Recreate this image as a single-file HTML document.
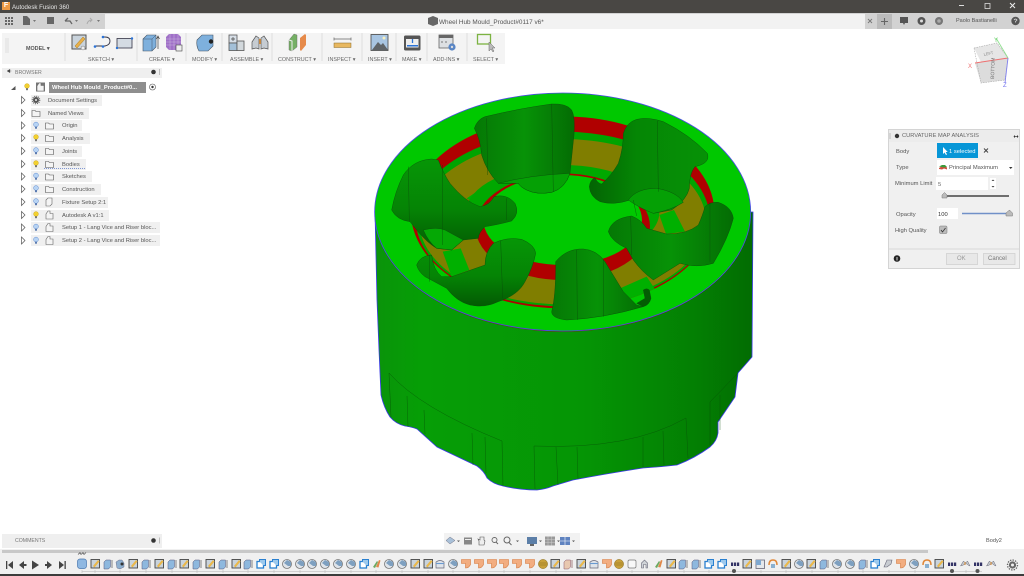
<!DOCTYPE html>
<html><head><meta charset="utf-8"><style>
html,body{margin:0;padding:0;background:#fff;width:1024px;height:576px;overflow:hidden}
#r{position:relative;width:1024px;height:576px;overflow:hidden;filter:blur(.35px);font-family:"Liberation Sans",sans-serif;color:#555;background:#fff}
#r div{position:absolute;box-sizing:border-box}
.t{font-size:5.8px;white-space:nowrap;line-height:11px}
.l{font-size:5.4px;white-space:nowrap;color:#666;line-height:8px;top:56px}
.rw{background:#f0f0f0;height:11px;font-size:5.8px;line-height:13.5px;color:#555;white-space:nowrap}
svg{position:absolute;left:0;top:0}
#tl{left:76px;top:556.5px;height:14px;display:flex}
#tl svg{position:static;width:12.8px;height:14px;flex:none}
</style></head><body><div id="r">

<div style="left:0;top:0;width:1024px;height:13px;background:#494744"></div>
<div style="left:0;top:13px;width:1024px;height:16px;background:#d2d2d2"></div>
<div style="left:105px;top:14px;width:760px;height:15px;background:#f2f2f2"></div>
<div style="left:0;top:29px;width:1024px;height:4px;background:#fff"></div>
<div class="t" style="left:12px;top:2px;color:#e6e6e6;font-size:6.100px">Autodesk Fusion 360</div>
<div style="left:2px;top:2px;width:8px;height:8px;background:#ee9a45;color:#fff;font:bold 7px/8px 'Liberation Sans',sans-serif;text-align:center">F</div>
<div class="t" style="left:439px;top:17px;font-size:6.400px;color:#555">Wheel Hub Mould_Product#0117 v6*</div>
<div class="t" style="left:956px;top:16px;color:#555;font-size:5.500px">Paolo Bastianelli</div>

<div style="left:2px;top:33px;width:503px;height:31px;background:#f4f4f4"></div>
<div class="l" style="left:26px;top:45px;font-weight:bold;color:#555">MODEL ▾</div>
<div class="l" style="left:88px">SKETCH ▾</div>
<div class="l" style="left:149px">CREATE ▾</div>
<div class="l" style="left:192px">MODIFY ▾</div>
<div class="l" style="left:230px">ASSEMBLE ▾</div>
<div class="l" style="left:278px">CONSTRUCT ▾</div>
<div class="l" style="left:328px">INSPECT ▾</div>
<div class="l" style="left:368px">INSERT ▾</div>
<div class="l" style="left:402px">MAKE ▾</div>
<div class="l" style="left:433px">ADD-INS ▾</div>
<div class="l" style="left:473px">SELECT ▾</div>

<div style="left:2px;top:68px;width:160px;height:10px;background:#efefef"></div>
<div class="t" style="left:15px;top:67.5px;color:#777;font-size:5.2px">BROWSER</div>
<div class="rw" style="left:49px;top:82px;width:97px;background:#8e8e8e;color:#fff;font-weight:bold;padding-left:3px">Wheel Hub Mould_Product#0...</div>
<div class="rw" style="left:31px;top:94.5px;width:71px;padding-left:17px">Document Settings</div>
<div class="rw" style="left:31px;top:107.5px;width:58px;padding-left:17px">Named Views</div>
<div class="rw" style="left:31px;top:120px;width:51px;padding-left:31px">Origin</div>
<div class="rw" style="left:31px;top:132.5px;width:59px;padding-left:31px">Analysis</div>
<div class="rw" style="left:31px;top:145.5px;width:51px;padding-left:31px">Joints</div>
<div class="rw" style="left:31px;top:158.5px;width:55px;padding-left:31px">Bodies</div>
<div class="rw" style="left:31px;top:171px;width:61px;padding-left:31px">Sketches</div>
<div class="rw" style="left:31px;top:183.5px;width:70px;padding-left:31px">Construction</div>
<div class="rw" style="left:31px;top:196.5px;width:77px;padding-left:31px">Fixture Setup 2:1</div>
<div class="rw" style="left:31px;top:209.5px;width:78px;padding-left:31px">Autodesk A v1:1</div>
<div class="rw" style="left:31px;top:222px;width:129px;padding-left:31px">Setup 1 - Lang Vice and Riser bloc...</div>
<div class="rw" style="left:31px;top:235px;width:129px;padding-left:31px">Setup 2 - Lang Vice and Riser bloc...</div>

<div style="left:2px;top:534px;width:160px;height:14px;background:#efefef"></div>
<div class="t" style="left:15px;top:535.5px;color:#777;font-size:5.2px">COMMENTS</div>

<svg width="1024" height="576" viewBox="0 0 1024 576">
<defs>
<linearGradient id="bd" x1="0" x2="1" y1="0" y2="0"><stop offset="0" stop-color="#0a930a"/><stop offset=".12" stop-color="#069e06"/><stop offset=".55" stop-color="#059505"/><stop offset=".85" stop-color="#037f03"/><stop offset="1" stop-color="#026c02"/></linearGradient>
<linearGradient id="lb" x1="0" x2="0" y1="0" y2="1"><stop offset="0" stop-color="#069606"/><stop offset=".55" stop-color="#058405"/><stop offset="1" stop-color="#035a03"/></linearGradient>
<linearGradient id="lc" x1="0" x2="1" y1="0" y2="0"><stop offset="0" stop-color="#036403"/><stop offset=".4" stop-color="#058605"/><stop offset="1" stop-color="#069206"/></linearGradient>
<linearGradient id="ld" x1="0" x2="1" y1="0" y2="0"><stop offset="0" stop-color="#057805"/><stop offset=".5" stop-color="#079207"/><stop offset="1" stop-color="#046c04"/></linearGradient>
<clipPath id="ringc"><ellipse cx="578" cy="382" rx="455" ry="288"/></clipPath>
</defs>

<!-- body -->
<path d="M375 212L377 300L379 350L381 395Q384 408 390 417Q396 424 405 426Q412 427 417 429L437 447L477 466Q484 471 487 478Q493 484 503 486Q520 490 537 490Q546 489 553 486L573 480Q610 473 643 468Q660 467 677 465Q695 458 710 447Q717 441 718 433L718 422L735 397L738 373L752 357L753 212Z" fill="url(#bd)" stroke="#3a3ae6" stroke-width=".8"/>
<g fill="none" stroke="#054f05" stroke-width=".45" stroke-opacity=".8">
<path d="M389 373Q420 408 502 441L503 486M389 373L391 417M407 396L408 427M424 410L425 434M472 433L473 465M485 437L486 473"/>
<path d="M534 446L535 489M556 447L558 485M577 447L578 479M534 446Q630 450 686 418L688 458M643 437L643 467M663 431L664 465"/>
<path d="M710 402L710 445M710 402L738 373M720 395L720 430"/>
</g>

<g transform="translate(370 85) scale(.33333)">
<ellipse cx="578" cy="381" rx="564" ry="357" fill="#a00000" transform="translate(0 2)"/>
<ellipse cx="578" cy="381" rx="564" ry="357" fill="#00c800" stroke="#4a4ae8" stroke-width="2.500"/>
<!-- ring -->
<ellipse cx="578" cy="382" rx="455" ry="288" fill="#b00000"/>
<ellipse cx="578" cy="402" rx="441" ry="262" fill="#00a400"/>
<ellipse cx="578" cy="410" rx="430" ry="248" fill="#807e00"/>
<g clip-path="url(#ringc)" fill="#00b000">
<path d="M290 340L365 290L392 325L335 365Z"/>
<path d="M750 610L830 575L860 620L780 660Z"/>
<path d="M868 390L912 375L945 440L888 447Z"/>
<path d="M218 500L272 490L298 555L245 575Z"/>
</g>
<ellipse cx="578" cy="382" rx="290" ry="142" fill="#00a800"/>
<ellipse cx="578" cy="425" rx="262" ry="160" fill="#b00000"/>
<ellipse cx="578" cy="405" rx="238" ry="135" fill="#00c800"/>

<!-- lobes -->
<g stroke="#0a4a0a" stroke-width="1.200" stroke-linejoin="round">
<path d="M313 130Q322 103 345 95Q450 70 545 57Q590 55 605 75Q616 95 612 150L600 265Q585 310 545 322Q500 330 470 315Q450 305 445 295L385 295Q350 260 335 210Q332 165 313 130Z" fill="url(#ld)"/>
<path d="M385 295Q480 270 600 265Q585 310 545 322Q500 330 470 315Q450 305 445 295Z" fill="#05a005"/>
<path d="M760 145Q770 112 800 103Q835 95 880 110Q960 150 1012 205Q1022 235 975 245Q958 265 958 310Q950 345 905 375L850 385L825 370L780 345Q730 362 690 350Q660 335 658 305Q660 285 675 278Q682 295 695 297Q725 270 745 235Q760 190 760 145Z" fill="url(#lc)"/>
<path d="M775 345Q800 310 860 310Q920 320 940 352Q905 375 850 385Q810 370 775 345Z" fill="#05a005"/>
<path d="M715 440Q725 400 785 393Q815 405 830 430L890 447Q950 448 985 420Q998 390 1005 365Q1020 350 1045 352Q1085 365 1090 400Q1075 460 1030 535Q980 550 930 535L850 585Q815 560 790 525L770 490Q725 470 715 440Z" fill="url(#ld)"/>
<path d="M557 530Q590 490 640 492Q680 495 705 530L760 620L800 660L820 665Q700 700 590 705Q545 700 545 680Q558 630 557 530Z" fill="url(#ld)"/>
<path d="M820 615Q830 608 838 615L843 640Q838 660 820 665L800 655L825 640Z" fill="#035c03"/>
<path d="M140 540Q150 512 185 510Q190 555 215 575L245 575L345 540Q345 500 370 475Q410 455 455 463Q495 480 497 505Q490 545 465 590Q445 630 385 650Q345 670 300 660Q260 650 230 610L165 575Q145 560 140 540Z" fill="url(#lb)"/>
<path d="M65 375Q75 320 100 270Q130 225 185 222L205 225Q220 265 240 295Q285 350 330 365Q360 360 372 335Q410 325 435 355Q450 385 425 408Q380 420 345 425Q325 445 325 460L280 465L245 495L200 490Q165 470 120 410Q80 405 65 375Z" fill="url(#lb)"/>
<path d="M160 435Q200 425 225 435L280 465L245 495L200 490Q175 470 160 435Z" fill="#05a805"/>
</g>
<g fill="none" stroke="#0a4a0a" stroke-width="1.100">
<path d="M350 100L353 270M545 57L550 320M862 108L865 320M790 345L800 393M1020 352L1020 530M782 395L785 510M620 495L622 705M700 525L700 695M392 467L398 640M178 510L178 590M115 245L118 410M218 240L218 480M410 340L410 405"/>
</g>
</g>

<!-- window controls -->
<path d="M959 5.500h5" stroke="#ddd" stroke-width="1" fill="none"/>
<rect x="985" y="3.500" width="5" height="5" fill="none" stroke="#ddd" stroke-width=".8"/>
<path d="M1010 3l5 5M1015 3l-5 5" stroke="#eee" stroke-width="1"/>
<!-- tab-bar left -->
<g fill="#666"><path d="M5 17h2v2H5zM8 17h2v2H8zM11 17h2v2h-2zM5 20h2v2H5zM8 20h2v2H8zM11 20h2v2h-2zM5 23h2v2H5zM8 23h2v2H8zM11 23h2v2h-2z"/><path d="M23 16h4l3 3v6h-7z"/><rect x="47" y="17" width="7" height="7"/></g>
<path d="M65 21l3-3M65 21h5l2 3" stroke="#666" fill="none" stroke-width="1.300"/>
<path d="M87 24q1-4 5-4M90 18l2 2-2 2" stroke="#aaa" fill="none" stroke-width="1"/>
<path d="M33 20l3 0-1.500 2zM75 20l3 0-1.500 2zM97 20l3 0-1.500 2z" fill="#777"/>
<path d="M428 18l5-2 5 2v6l-5 2-5-2z" fill="#666"/>
<path d="M868 19l4 4M872 19l-4 4" stroke="#777" stroke-width=".9"/>
<!-- tab-bar right -->
<rect x="877" y="14" width="15" height="15" fill="#bbb"/>
<path d="M884.500 18v7M881 21.500h7" stroke="#666" stroke-width="1.100"/>
<path d="M900 17h8v6h-3l-1 2-1-2h-3z" fill="#555"/>
<circle cx="921.500" cy="21" r="4" fill="#555"/><circle cx="921.500" cy="21" r="1.500" fill="#ddd"/>
<circle cx="939" cy="21" r="4" fill="#777"/><circle cx="939" cy="21" r="1.800" fill="#aaa"/>
<circle cx="1015.500" cy="21" r="4.200" fill="#555"/><path d="M1014 20q1.500-2 3 0l-1.500 1.500v1" stroke="#ddd" fill="none" stroke-width=".8"/>

<!-- toolbar -->
<g stroke="#cfcfcf" stroke-width=".6">
<path d="M6 38v15M8 38v15M65 33v28M137 33v28M186 33v28M222 33v28M272 33v28M322 33v28M362 33v28M396 33v28M427 33v28M467 33v28"/></g>
<!-- sketch -->
<rect x="72" y="35" width="14" height="14" fill="#c9d3dc" stroke="#555" stroke-width="1"/>
<path d="M75 46l8-9 2 2-8 9z" fill="#e8b04a" stroke="#a87818" stroke-width=".5"/>
<circle cx="83" cy="48" r="2" fill="#eee" stroke="#777" stroke-width=".5"/>
<!-- arc -->
<path d="M95 46h10q5-1 5-5t-5-4h-2" fill="none" stroke="#334" stroke-width=".9"/>
<circle cx="95" cy="46.500" r="1.300" fill="#2a72d5"/><circle cx="103" cy="46.500" r="1.300" fill="#2a72d5"/><circle cx="103" cy="37" r="1.300" fill="#2a72d5"/>
<!-- rect -->
<rect x="117" y="38.500" width="15" height="9.500" fill="#d4dbe3" stroke="#334" stroke-width=".8"/>
<circle cx="117" cy="48" r="1.200" fill="#2a72d5"/><circle cx="132" cy="38.500" r="1.200" fill="#2a72d5"/>
<!-- extrude -->
<path d="M143 39l4-4h9v12l-4 4h-9z" fill="#7eb0dd" stroke="#456" stroke-width=".6"/><path d="M143 39h9v12M152 39l4-4" fill="none" stroke="#456" stroke-width=".5"/>
<path d="M158 49v-12M156.500 39l1.500-3 1.500 3" stroke="#444" fill="none" stroke-width=".7"/>
<!-- grid -->
<path d="M166 37l3-3h9l3 3v10l-3 3h-9l-3-3z" fill="#a070c8"/>
<path d="M166 39h15M166 42h15M166 45h15M170 34v16M174 34v16M178 34v16" stroke="#c9b4dc" stroke-width=".5"/>
<rect x="176" y="45" width="6" height="6" fill="#eee" stroke="#444" stroke-width=".6"/>
<!-- modify -->
<path d="M197 40l5-5h11v11l-5 5h-9q-3-5-2-11z" fill="#7eb0dd" stroke="#456" stroke-width=".6"/>
<circle cx="211" cy="41.500" r="2.200" fill="#222"/>
<!-- assemble -->
<rect x="229" y="35" width="8" height="8" fill="#d8e0e8" stroke="#555" stroke-width=".8"/>
<path d="M231 39h4M233 37v4" stroke="#444" stroke-width=".7"/>
<rect x="229" y="43" width="8" height="7.500" fill="#a3c0d8" stroke="#555" stroke-width=".8"/>
<rect x="237" y="41" width="7" height="9.500" fill="#d2d8dc" stroke="#555" stroke-width=".8"/>
<!-- joint -->
<path d="M252 42l4-6 3 2v11l-3-1-4 1zM268 42l-4-6-3 2v11l3-1 4 1z" fill="#c6ccd2" stroke="#555" stroke-width=".7"/>
<path d="M260 39v5" stroke="#d9882a" stroke-width="1.500"/>
<!-- construct -->
<path d="M289 40l5-6 3 1v12l-5 4-3-1z" fill="#75b065" stroke="#666" stroke-width=".4"/>
<path d="M289 40l3 1v10" stroke="#eee" fill="none" stroke-width="1"/>
<path d="M300 38l5-4 1 1v10l-5 6-1-1z" fill="#e68a4a"/>
<!-- inspect -->
<path d="M334 39h17" stroke="#666" stroke-width=".7"/><path d="M334 37.500v3M351 37.500v3" stroke="#666" stroke-width=".7"/>
<rect x="334" y="43" width="17" height="4.500" fill="#e8b860" stroke="#8a6a28" stroke-width=".5"/>
<!-- insert -->
<rect x="371" y="34.500" width="17" height="16" fill="#a8c5e2" stroke="#555" stroke-width=".9"/>
<path d="M372 50l6-8 3 3 2-2 5 7z" fill="#5f6468"/><circle cx="384" cy="38" r="1.500" fill="#f8f0c0"/>
<!-- make -->
<rect x="404" y="35.500" width="16.500" height="15" rx="1.500" fill="#555"/>
<rect x="406" y="39" width="12.500" height="8.500" fill="#eee"/>
<path d="M412.500 39v4" stroke="#2a72d5" stroke-width="1.300"/><rect x="407" y="45" width="11" height="1.500" fill="#2a72d5"/>
<!-- addins -->
<rect x="439" y="35" width="14" height="13" fill="#dde0e3" stroke="#666" stroke-width=".8"/><rect x="439" y="35" width="14" height="3" fill="#666"/>
<path d="M441 42h2M445 42h2" stroke="#555" stroke-width=".7"/>
<circle cx="452" cy="47" r="3.600" fill="#5a86c5"/><circle cx="452" cy="47" r="1.200" fill="#ddd"/>
<!-- select -->
<rect x="477.500" y="34.500" width="13" height="9.500" fill="none" stroke="#7cb342" stroke-width="1.300"/>
<path d="M489 42v9l2-2 2 3 1-1-2-3h3z" fill="#bbb" stroke="#666" stroke-width=".5"/>

<!-- browser icons -->
<path d="M7 71l3-1.800v3.600zM10 71h1.500" fill="#444" stroke="#444" stroke-width=".3"/>
<circle cx="153.500" cy="72" r="2.300" fill="#333"/><path d="M159.500 69v6" stroke="#bbb"/>
<path d="M11 90l4.500-4v4z" fill="#555"/>
<g fill="#fff" stroke="#555" stroke-width=".7">
<path d="M21.500 96.500l3.500 3.500-3.500 3.500zM21.500 109.500l3.500 3.500-3.500 3.500zM21.500 122l3.500 3.500-3.500 3.500zM21.500 134.500l3.500 3.500-3.500 3.500zM21.500 147.500l3.500 3.500-3.500 3.500zM21.500 160.500l3.500 3.500-3.500 3.500zM21.500 173l3.500 3.500-3.500 3.500zM21.500 185.500l3.500 3.500-3.500 3.500zM21.500 198.500l3.500 3.500-3.500 3.500zM21.500 211.500l3.500 3.500-3.500 3.500zM21.500 224l3.500 3.500-3.500 3.500zM21.500 237l3.500 3.500-3.500 3.500z"/></g>
<defs>
<g id="by"><circle cx="0" cy="-1" r="2.400" fill="#f2d030" stroke="#c8a010" stroke-width=".4"/><rect x="-1" y="1.200" width="2" height="2" fill="#777"/></g>
<g id="bb"><circle cx="0" cy="-1" r="2.400" fill="#b8d4f4" stroke="#5a88d0" stroke-width=".5"/><rect x="-1" y="1.200" width="2" height="2" fill="#5a7ab0"/></g>
<path id="fo" d="M-4-2.500h3l1 1h4v5h-8z" fill="#f4f4f4" stroke="#555" stroke-width=".6"/>
<g id="cp"><path d="M-3.500 4v-5l2-3h2v2.500h3V4z" fill="#f4f4f4" stroke="#666" stroke-width=".6"/></g>
</defs>
<use href="#by" x="27" y="87"/>
<rect x="36" y="82.500" width="9" height="9" fill="#777"/><use href="#cp" x="40.500" y="87"/>
<circle cx="152.500" cy="87" r="3" fill="#fff" stroke="#555" stroke-width=".6"/><circle cx="152.500" cy="87" r="1.200" fill="#333"/>
<circle cx="36" cy="100" r="3" fill="#555"/><circle cx="36" cy="100" r="3.800" fill="none" stroke="#555" stroke-width="1" stroke-dasharray="1 1"/><circle cx="36" cy="100" r="1" fill="#f0f0f0"/>
<use href="#fo" x="36" y="113"/>
<use href="#bb" x="36" y="125.500"/><use href="#fo" x="49.500" y="125.500"/>
<use href="#by" x="36" y="138"/><use href="#fo" x="49.500" y="138"/>
<use href="#bb" x="36" y="151"/><use href="#fo" x="49.500" y="151"/>
<use href="#by" x="36" y="164"/><use href="#fo" x="49.500" y="164"/>
<path d="M44 168.500h41" stroke="#5a78c8" stroke-width=".8" stroke-dasharray="1 1"/>
<use href="#bb" x="36" y="176.500"/><use href="#fo" x="49.500" y="176.500"/>
<use href="#bb" x="36" y="189"/><use href="#fo" x="49.500" y="189"/>
<use href="#bb" x="36" y="202"/><path d="M46 200l2-2h4v6l-2 2h-4z" fill="#f4f4f4" stroke="#666" stroke-width=".6"/>
<use href="#by" x="36" y="215"/><use href="#cp" x="49.500" y="215"/>
<use href="#bb" x="36" y="227.500"/><use href="#cp" x="49.500" y="227.500"/>
<use href="#bb" x="36" y="240.500"/><use href="#cp" x="49.500" y="240.500"/>
<circle cx="153.500" cy="540.500" r="2.300" fill="#333"/><path d="M159.500 537.500v6" stroke="#bbb"/>

<!-- view cube -->
<path d="M974 48l23-5 11 15-27 4z" fill="#e6e6e6"/><path d="M975 63l33-5-3 22-24 3z" fill="#dcdcdc"/>
<path d="M974 48l23-5 11 15-3 22-24 3z" fill="none" stroke="#aaa" stroke-width=".6" stroke-dasharray="1.500 1"/>
<path d="M975 63l33-5" stroke="#ee7070" stroke-width=".9"/><path d="M996 38l12 20" stroke="#90e090" stroke-width=".9"/><path d="M1008 58l-3 25" stroke="#8080ee" stroke-width=".9"/>
<text x="984" y="56" font-size="4" fill="#888" transform="rotate(-12 984 56)" font-family="Liberation Sans,sans-serif">LEFT</text>
<text x="0" y="0" font-size="5" fill="#777" transform="translate(994 79) rotate(-88)" font-family="Liberation Sans,sans-serif">BOTTOM</text>
<text x="968" y="68" font-size="6" fill="#ee7070" font-family="Liberation Sans,sans-serif">X</text>
<text x="994" y="42" font-size="6" fill="#70d070" font-family="Liberation Sans,sans-serif">Y</text>
<text x="1003" y="87" font-size="6" fill="#7070ee" font-family="Liberation Sans,sans-serif">Z</text>

<!-- nav bar -->
<rect x="444" y="533" width="136" height="16" fill="#f2f2f2"/>
<path d="M450 537l5 3.500-5 3.500-4-3.500z" fill="#a8c0d8" stroke="#778" stroke-width=".5"/>
<rect x="464" y="537.500" width="8" height="7" fill="#888"/><rect x="465" y="539" width="6" height="1" fill="#eee"/>
<path d="M479 545v-4l-1-2 2 1v-3h4v3l1 1-1 4z" fill="#eee" stroke="#555" stroke-width=".6"/>
<circle cx="494.500" cy="540" r="2.500" fill="none" stroke="#666" stroke-width=".9"/><path d="M496 542l2 2" stroke="#666"/>
<circle cx="507" cy="540" r="3" fill="none" stroke="#666" stroke-width="1"/><path d="M509 542.500l2.500 2.500" stroke="#666"/>
<rect x="527" y="537" width="10" height="7" fill="#5c7fa8"/><rect x="530" y="544" width="4" height="2" fill="#666"/>
<rect x="545" y="536.500" width="10" height="9" fill="#999"/><path d="M548 536.500v9M551.500 536.500v9M545 539.500h10M545 542.500h10" stroke="#ccc" stroke-width=".5"/>
<rect x="560" y="537" width="10" height="8" fill="#5f83c0"/><path d="M560 541h10M565 537v8" stroke="#fff" stroke-width=".6"/>
<path d="M457 540.500h3l-1.500 1.500zM516 540.500h3l-1.500 1.500zM539 540.500h3l-1.500 1.500zM557 540.500h3l-1.500 1.500zM572 540.500h3l-1.500 1.500z" fill="#555"/>

<!-- panel -->
<rect x="888.500" y="129.500" width="131" height="139" fill="#f0f0f0" stroke="#d4d4d4"/>
<rect x="889" y="130" width="130" height="12" fill="#ececec"/>
<rect x="937" y="143" width="41" height="15" fill="#0696d7"/>
<rect x="937" y="160" width="77" height="15" fill="#fff"/>
<rect x="936" y="177" width="52" height="13" fill="#fff"/>
<rect x="990" y="178" width="6" height="11" fill="#fff"/>
<path d="M991.500 181l1.500-1.500 1.500 1.500zM991.500 186l1.500 1.500 1.500-1.500z" fill="#444"/>
<rect x="937" y="208" width="21" height="11" fill="#fff"/>
<path d="M943 196h66" stroke="#444" stroke-width="1.600"/>
<path d="M942 198l0-3 2.500-2.500 2.500 2.500v3z" fill="#bbb" stroke="#777" stroke-width=".5"/>
<path d="M962 213.500h47" stroke="#7090c8" stroke-width="1.600"/>
<path d="M1006 216l0-3 3.500-3 3 3v3z" fill="#bbb" stroke="#777" stroke-width=".5"/>
<rect x="939.500" y="226" width="7.500" height="7.500" rx="1" fill="#bbb" stroke="#777" stroke-width=".5"/>
<path d="M941 230l1.500 2 3-4" stroke="#333" fill="none" stroke-width=".8"/>
<path d="M889 249h130" stroke="#d8d8d8"/>
<rect x="946.500" y="253.500" width="31" height="11" fill="#e8e8e8" stroke="#ccc" stroke-width=".7"/>
<rect x="983.500" y="253.500" width="31.500" height="11" fill="#e8e8e8" stroke="#ccc" stroke-width=".7"/>
<circle cx="897" cy="258.500" r="3.300" fill="#222"/><path d="M897 257v3.500" stroke="#fff" stroke-width=".8"/>
<circle cx="897" cy="136" r="2.200" fill="#333"/>
<path d="M890 133v6" stroke="#bbb"/>
<path d="M1014.500 136.500h3" stroke="#333" stroke-width=".7"/><path d="M1015 135l-1.500 1.500 1.500 1.500zM1017 135l1.500 1.500-1.500 1.500z" fill="#333"/>
<path d="M984 148.500l4 4M988 148.500l-4 4" stroke="#444" stroke-width="1"/>
<path d="M943 147v7l1.500-1.500 1.500 2.500 1-.5-1.300-2.500h2z" fill="#fff"/>
<path d="M939 168l4-2.500 4 2v2l-3-1-2 1-3-.5z" fill="#d05040"/><path d="M939 166.500l3-1.500h3l2 2-3 .5z" fill="#3a9a3a"/>
<path d="M1009 167h3.500l-1.800 2z" fill="#333"/>

<!-- timeline -->
<rect x="0" y="549" width="1024" height="25" fill="#f0f0f0"/>
<rect x="2" y="550" width="926" height="3" fill="#c8c8c8"/>
<rect x="0" y="574" width="1024" height="2" fill="#3c3c3c"/>
<path d="M82 571.500h900" stroke="#c6c6c6" stroke-width=".7"/>
<path d="M82 570v3M95 570v3M120 570v3M146 570v3M172 570v3M197 570v3M223 570v3M248 570v3M274 570v3M300 570v3M325 570v3M351 570v3M376 570v3M402 570v3M428 570v3M453 570v3M479 570v3M504 570v3M530 570v3M556 570v3M581 570v3M607 570v3M632 570v3M658 570v3M684 570v3M709 570v3M761 570v3M786 570v3M812 570v3M838 570v3M863 570v3M889 570v3M915 570v3M966 570v3" stroke="#bbb" stroke-width=".6"/>
<circle cx="734" cy="571" r="2" fill="#555"/><circle cx="952" cy="571" r="2" fill="#555"/><circle cx="977.500" cy="571" r="2" fill="#555"/>
<g fill="#444">
<rect x="6" y="561" width="1.300" height="8"/><path d="M13 561v8l-5-4z"/>
<path d="M19 565l5-4v8zM24 564h2.500v2H24z"/>
<path d="M32 560.500l7 4.500-7 4.500z"/>
<path d="M45 564h2.500v2H45zM47 561l5 4-5 4z"/>
<path d="M59 561l5 4-5 4z"/><rect x="64.500" y="561" width="1.300" height="8"/>
</g>
<path d="M78 554.500l2-2 1 2 2-2 1 2 2-2" stroke="#444" fill="none" stroke-width=".6"/>
<g transform="translate(1012.500 565)"><circle r="3.600" fill="#666"/><circle r="5" fill="none" stroke="#666" stroke-width="1.300" stroke-dasharray="1.400 1.200"/><circle r="1.500" fill="#f0f0f0"/></g>

<defs>
<g id="s"><rect x="2" y="2.500" width="8.500" height="8.500" fill="#c9d3dc" stroke="#444" stroke-width=".9"/><path d="M4 9l5-6 1.500 1.500-5 6z" fill="#eab84a"/></g>
<g id="e"><path d="M2 5l2-2h4.500v7l-2 2H2z" fill="#8eb8de" stroke="#557" stroke-width=".5"/><path d="M10 11V3" stroke="#555" stroke-width=".7"/></g>
<g id="m"><path d="M2 5l3-2h3l2 3v4l-4 2-3-1z" fill="#8eb0d0" stroke="#557" stroke-width=".4"/><circle cx="8" cy="7" r="1.500" fill="#333"/></g>
<g id="b"><rect x="2" y="4.500" width="6.500" height="6.500" fill="#fff" stroke="#2a80d0" stroke-width="1.300"/><path d="M4.500 4.500V2.500h6v6H8.500" fill="#9cc8ec" stroke="#2a80d0" stroke-width="1"/></g>
<g id="q"><rect x="1.500" y="2" width="9" height="9.500" rx="2.500" fill="#8fb8e2" stroke="#4a78b0" stroke-width=".7"/></g>
<g id="f"><circle cx="6" cy="7" r="4.500" fill="#dfe4ea" stroke="#777" stroke-width=".8"/><path d="M3 6l3-3 4 2v4H7z" fill="#7ea0c0"/></g>
<g id="c"><path d="M3 10l4-6 1 1-3 6z" fill="#6ba860"/><path d="M6 10l3-7 1.500.5-2 7z" fill="#e0884a"/></g>
<g id="w"><path d="M2 5q4-3 8 0v6H2z" fill="#dfe4ea" stroke="#667" stroke-width=".7"/><path d="M2 6.500h8" stroke="#6a9ad0" stroke-width="1.100"/></g>
<g id="o"><path d="M1.500 2.500h9v5q-1.500 3.500-5 3.500v-4.500h-4z" fill="#f2ad80" stroke="#d57a3e" stroke-width=".6"/></g>
<g id="g"><circle cx="6" cy="7" r="4.600" fill="#c8a03a" stroke="#8a6d1e" stroke-width=".5"/><path d="M1.500 6h9M1.500 8h9" stroke="#8a6d1e" stroke-width=".5"/></g>
<g id="r2"><rect x="2" y="3" width="8" height="8" rx="1.500" fill="#f8f8f8" stroke="#777" stroke-width=".7"/></g>
<g id="a"><path d="M2.500 11V6l3-3 3 3v5H7V7.500H4.500V11z" fill="#d0d4d8" stroke="#667" stroke-width=".6"/></g>
<g id="d"><path d="M2 5.500h2.200v3.500H2zM5 5.500h2.200v3.500H5zM8 5.500h2.200v3.500H8z" fill="#336"/></g>
<g id="h"><rect x="2" y="3" width="8.500" height="8.500" fill="#e4e8ec" stroke="#667" stroke-width=".8"/><rect x="2" y="3" width="5" height="5" fill="#7ea8d0"/></g>
<g id="p"><path d="M2 8q0-5 4-5t4 5" fill="none" stroke="#e0883a" stroke-width="1.500"/><rect x="4" y="7" width="4" height="4" fill="#8ab0d0"/></g>
<g id="l"><path d="M2 10l3-7h5l-1 4-4 3z" fill="#c8ccd2" stroke="#667" stroke-width=".6"/></g>
<g id="j"><path d="M1.500 9l3-5 2 2 2-2 2.500 5-2-1-2.500-2-2 2z" fill="#c4c8cc" stroke="#667" stroke-width=".5"/><path d="M6 5v3" stroke="#d9882a"/></g>
<g id="y"><path d="M2 5l2-2h4.500v7l-2 2H2z" fill="#e8c8b0" stroke="#856" stroke-width=".5"/><path d="M10 11V3" stroke="#855" stroke-width=".7"/></g>
</defs>
</svg>

<div class="t" style="left:986px;top:536px;font-size:5.600px">Body2</div>
<div class="t" style="left:902px;top:131px;font-size:5.700px;color:#666">CURVATURE MAP ANALYSIS</div>
<div class="t" style="left:896px;top:146.500px">Body</div>
<div class="t" style="left:896px;top:162.500px">Type</div>
<div class="t" style="left:895px;top:179px">Minimum Limit</div>
<div class="t" style="left:896px;top:210px">Opacity</div>
<div class="t" style="left:895px;top:226px">High Quality</div>
<div class="t" style="left:949px;top:146.500px;color:#fff">1 selected</div>
<div class="t" style="left:949px;top:162.500px">Principal Maximum</div>
<div class="t" style="left:938px;top:180px;color:#666">5</div>
<div class="t" style="left:938px;top:210px;color:#333">100</div>
<div class="t" style="left:957px;top:254px;color:#999;font-size:6px">OK</div>
<div class="t" style="left:988px;top:254px;color:#777;font-size:6px">Cancel</div>

<div id="tl">
<svg viewBox="0 0 12.800 14"><use href="#q"/></svg><svg viewBox="0 0 12.800 14"><use href="#s"/></svg><svg viewBox="0 0 12.800 14"><use href="#e"/></svg><svg viewBox="0 0 12.800 14"><use href="#m"/></svg><svg viewBox="0 0 12.800 14"><use href="#s"/></svg><svg viewBox="0 0 12.800 14"><use href="#e"/></svg><svg viewBox="0 0 12.800 14"><use href="#s"/></svg><svg viewBox="0 0 12.800 14"><use href="#e"/></svg><svg viewBox="0 0 12.800 14"><use href="#s"/></svg><svg viewBox="0 0 12.800 14"><use href="#e"/></svg><svg viewBox="0 0 12.800 14"><use href="#s"/></svg><svg viewBox="0 0 12.800 14"><use href="#e"/></svg><svg viewBox="0 0 12.800 14"><use href="#s"/></svg><svg viewBox="0 0 12.800 14"><use href="#e"/></svg><svg viewBox="0 0 12.800 14"><use href="#b"/></svg><svg viewBox="0 0 12.800 14"><use href="#b"/></svg><svg viewBox="0 0 12.800 14"><use href="#f"/></svg><svg viewBox="0 0 12.800 14"><use href="#f"/></svg><svg viewBox="0 0 12.800 14"><use href="#f"/></svg><svg viewBox="0 0 12.800 14"><use href="#f"/></svg><svg viewBox="0 0 12.800 14"><use href="#f"/></svg><svg viewBox="0 0 12.800 14"><use href="#f"/></svg><svg viewBox="0 0 12.800 14"><use href="#b"/></svg><svg viewBox="0 0 12.800 14"><use href="#c"/></svg><svg viewBox="0 0 12.800 14"><use href="#f"/></svg><svg viewBox="0 0 12.800 14"><use href="#f"/></svg><svg viewBox="0 0 12.800 14"><use href="#s"/></svg><svg viewBox="0 0 12.800 14"><use href="#s"/></svg><svg viewBox="0 0 12.800 14"><use href="#w"/></svg><svg viewBox="0 0 12.800 14"><use href="#f"/></svg><svg viewBox="0 0 12.800 14"><use href="#o"/></svg><svg viewBox="0 0 12.800 14"><use href="#o"/></svg><svg viewBox="0 0 12.800 14"><use href="#o"/></svg><svg viewBox="0 0 12.800 14"><use href="#o"/></svg><svg viewBox="0 0 12.800 14"><use href="#o"/></svg><svg viewBox="0 0 12.800 14"><use href="#o"/></svg><svg viewBox="0 0 12.800 14"><use href="#g"/></svg><svg viewBox="0 0 12.800 14"><use href="#s"/></svg><svg viewBox="0 0 12.800 14"><use href="#y"/></svg><svg viewBox="0 0 12.800 14"><use href="#s"/></svg><svg viewBox="0 0 12.800 14"><use href="#w"/></svg><svg viewBox="0 0 12.800 14"><use href="#o"/></svg><svg viewBox="0 0 12.800 14"><use href="#g"/></svg><svg viewBox="0 0 12.800 14"><use href="#r2"/></svg><svg viewBox="0 0 12.800 14"><use href="#a"/></svg><svg viewBox="0 0 12.800 14"><use href="#c"/></svg><svg viewBox="0 0 12.800 14"><use href="#s"/></svg><svg viewBox="0 0 12.800 14"><use href="#e"/></svg><svg viewBox="0 0 12.800 14"><use href="#e"/></svg><svg viewBox="0 0 12.800 14"><use href="#b"/></svg><svg viewBox="0 0 12.800 14"><use href="#b"/></svg><svg viewBox="0 0 12.800 14"><use href="#d"/></svg><svg viewBox="0 0 12.800 14"><use href="#s"/></svg><svg viewBox="0 0 12.800 14"><use href="#h"/></svg><svg viewBox="0 0 12.800 14"><use href="#p"/></svg><svg viewBox="0 0 12.800 14"><use href="#s"/></svg><svg viewBox="0 0 12.800 14"><use href="#f"/></svg><svg viewBox="0 0 12.800 14"><use href="#s"/></svg><svg viewBox="0 0 12.800 14"><use href="#e"/></svg><svg viewBox="0 0 12.800 14"><use href="#f"/></svg><svg viewBox="0 0 12.800 14"><use href="#f"/></svg><svg viewBox="0 0 12.800 14"><use href="#e"/></svg><svg viewBox="0 0 12.800 14"><use href="#b"/></svg><svg viewBox="0 0 12.800 14"><use href="#l"/></svg><svg viewBox="0 0 12.800 14"><use href="#o"/></svg><svg viewBox="0 0 12.800 14"><use href="#f"/></svg><svg viewBox="0 0 12.800 14"><use href="#p"/></svg><svg viewBox="0 0 12.800 14"><use href="#s"/></svg><svg viewBox="0 0 12.800 14"><use href="#d"/></svg><svg viewBox="0 0 12.800 14"><use href="#j"/></svg><svg viewBox="0 0 12.800 14"><use href="#d"/></svg><svg viewBox="0 0 12.800 14"><use href="#j"/></svg>
</div>
</div></body></html>
